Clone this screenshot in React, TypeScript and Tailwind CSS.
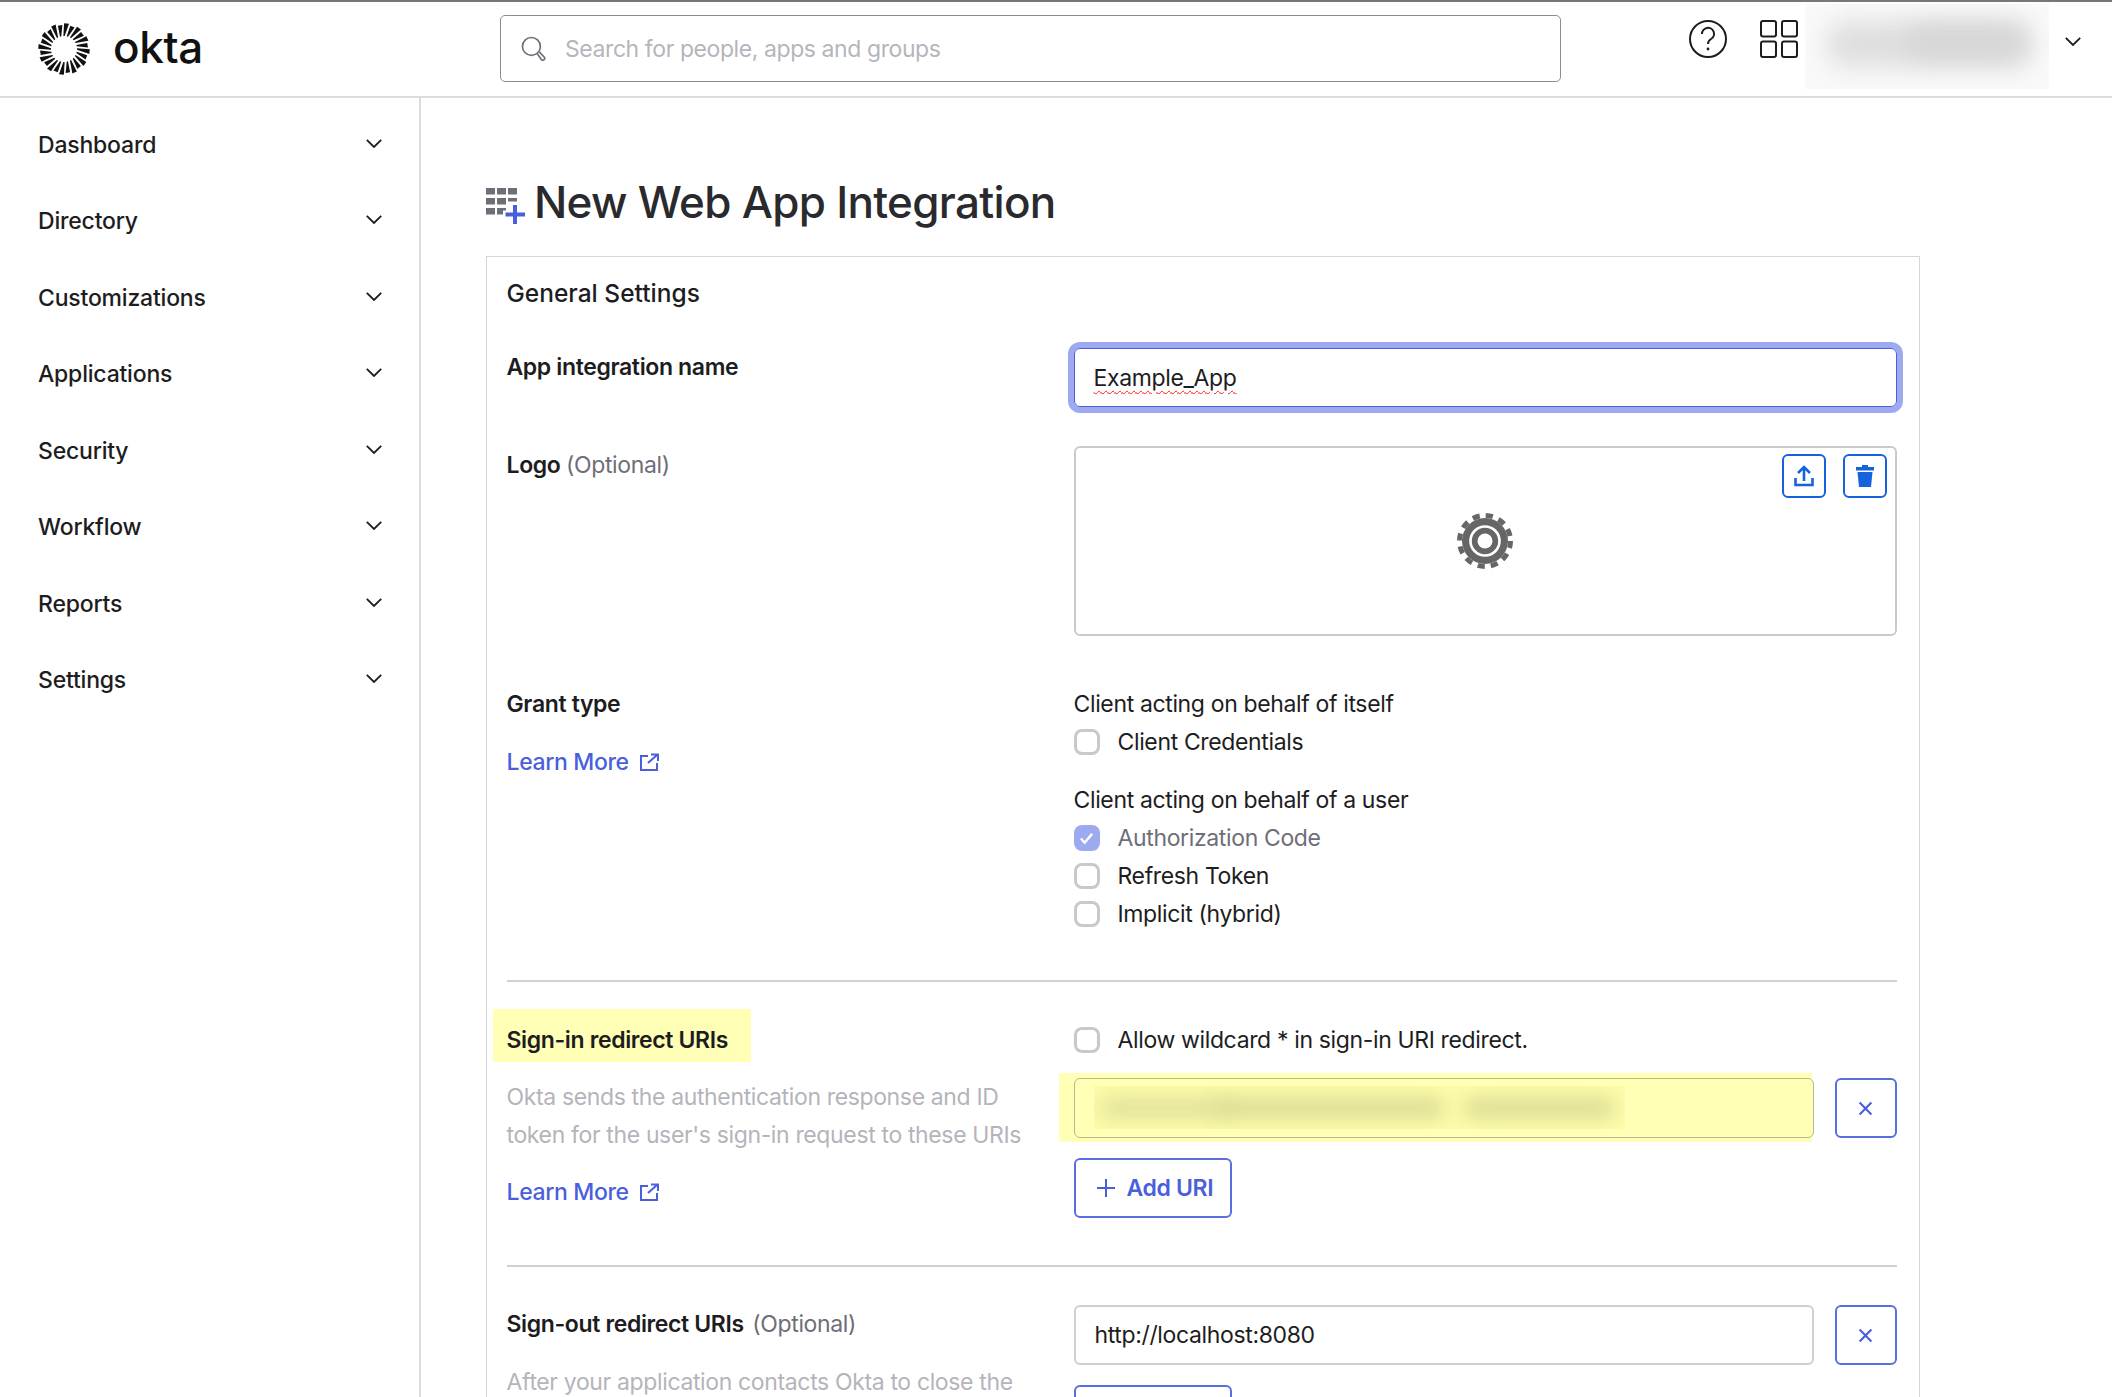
import { ReactNode } from "react";

const navItems = ["Dashboard", "Directory", "Customizations", "Applications", "Security", "Workflow", "Reports", "Settings"];

function Chevron({ className }: { className?: string }) {
	return (
		<svg viewBox="0 0 16 9" className={className} fill="none" stroke="currentColor" strokeWidth="1.8">
			<path d="M0.8 0.8 L8 8 L15.2 0.8" />
		</svg>
	);
}

function OktaMark() {
	const rays = Array.from({ length: 24 }, (_, i) => i);
	return (
		<svg viewBox="0 0 52 52" className="w-[52px] h-[52px]">
			{rays.map((i) => {
				const a = (i / 24) * Math.PI * 2;
				const b = a + 0.1;
				const outer = i % 2 === 0 ? 25.8 : 24;
				const inner = 13;
				const w = 0.095;
				const pts = [
					[26 + inner * Math.cos(a - 0.05), 26 + inner * Math.sin(a - 0.05)],
					[26 + inner * Math.cos(a + 0.05), 26 + inner * Math.sin(a + 0.05)],
					[26 + outer * Math.cos(b + w), 26 + outer * Math.sin(b + w)],
					[26 + outer * Math.cos(b - w), 26 + outer * Math.sin(b - w)],
				];
				return <polygon key={i} points={pts.map((p) => p.join(",")).join(" ")} fill="#111" />;
			})}
		</svg>
	);
}

function ExternalIcon() {
	return (
		<svg viewBox="0 0 21 18" className="w-[21px] h-[18px] ml-[10px]" fill="none" stroke="currentColor" strokeWidth="2">
			<path d="M9 3 H2 V17 H18 V10" />
			<path d="M9 10 L18 2 M12 1.5 H19 V8" />
		</svg>
	);
}

function LearnMore({ className }: { className?: string }) {
	return (
		<div className={`flex items-center h-[38px] text-[#4a5fdc] font-medium ${className ?? ""}`}>
			Learn More
			<ExternalIcon />
		</div>
	);
}

function CheckRow({ label, checked }: { label: string; checked?: boolean }) {
	return (
		<div className="flex items-center h-[38px]">
			{checked ? (
				<div className="w-[26px] h-[26px] rounded-[8px] bg-[#9daaf0] flex items-center justify-center">
					<svg viewBox="0 0 16 14" className="w-[15px] h-[13px]" fill="none" stroke="white" strokeWidth="2.6">
						<path d="M2 7 L6 11.5 L14 2" />
					</svg>
				</div>
			) : (
				<div className="w-[26px] h-[26px] rounded-[8px] border-[3px] border-[#c9c9cc] bg-white" />
			)}
			<span className={`ml-[18px] ${checked ? "text-[#6e6e78]" : ""}`}>{label}</span>
		</div>
	);
}

function XButton() {
	return (
		<div className="w-[62px] h-[60px] rounded-[6px] border-2 border-[#5b6ee0] flex items-center justify-center text-[#4a5fdc]">
			<svg viewBox="0 0 14 14" className="w-[15px] h-[15px]" fill="none" stroke="currentColor" strokeWidth="2">
				<path d="M1.5 1.5 L12.5 12.5 M12.5 1.5 L1.5 12.5" />
			</svg>
		</div>
	);
}

function AddUri() {
	return (
		<div className="w-[158px] h-[60px] rounded-[6px] border-2 border-[#5b6ee0] flex items-center pl-[21px] text-[#4a5fdc] font-semibold">
			<svg viewBox="0 0 18 18" className="w-[18px] h-[18px] mr-[12px]" fill="none" stroke="currentColor" strokeWidth="2">
				<path d="M9 0 V18 M0 9 H18" />
			</svg>
			Add URI
		</div>
	);
}

function Row({ left, right }: { left: ReactNode; right: ReactNode }) {
	return (
		<div className="grid grid-cols-[567px_823px]">
			<div>{left}</div>
			<div>{right}</div>
		</div>
	);
}

function Gear() {
	return (
		<svg viewBox="0 0 58 58" className="w-[58px] h-[58px]">
			<circle cx="29" cy="29" r="23" fill="#666" />
			<circle cx="29" cy="29" r="25.5" fill="none" stroke="#666" strokeWidth="5" strokeDasharray="7.2 6.15" />
			<circle cx="29" cy="29" r="14.5" fill="none" stroke="#fff" strokeWidth="2.6" />
			<circle cx="29" cy="29" r="7.5" fill="#fff" />
		</svg>
	);
}

function Header() {
	return (
		<header className="h-[98px] shrink-0 border-t-2 border-t-[#777] border-b-2 border-b-[#dcdce0] flex items-center relative">
			<div className="ml-[38px] w-[52px] -mt-[1px]">
				<OktaMark />
			</div>
			<div className="ml-[23px] w-[387px] text-[44px] font-medium text-[#111] leading-none -mt-[4px]">okta</div>
			<div className="w-[1061px] h-[67px] -mt-[2px] rounded-[5px] border-[1.5px] border-[#8c8c96] flex items-center pl-[20px]">
				<svg viewBox="0 0 24 24" className="w-[25px] h-[25px] mt-[1px]" fill="none" stroke="#6e6e78" strokeWidth="1.6">
					<circle cx="10" cy="10" r="8.6" />
					<path d="M15.6 17 L19.4 22.4 a1.7 1.7 0 0 0 3 -2 L17.6 15.2" />
				</svg>
				<span className="ml-[19px] mt-[2px] text-[#b5b5bc] tracking-[-0.42px]">Search for people, apps and groups</span>
			</div>
			<svg viewBox="0 0 38 38" className="ml-[128px] -mt-[21px] w-[38px] h-[38px]" fill="none" stroke="#1d1d21" strokeWidth="2">
				<circle cx="19" cy="19" r="18" />
				<path d="M13 14 a6 6 0 1 1 9 5 c-2 1.3 -3 2.5 -3 5" />
				<circle cx="19" cy="29" r="1.4" fill="#1d1d21" stroke="none" />
			</svg>
			<svg viewBox="0 0 38 38" className="ml-[33px] -mt-[21px] w-[38px] h-[38px]" fill="none" stroke="#1d1d21" strokeWidth="2">
				<rect x="1" y="1" width="15" height="15.5" rx="2" />
				<rect x="22" y="1" width="15" height="15.5" rx="2" />
				<rect x="1" y="21.5" width="15" height="15.5" rx="2" />
				<rect x="22" y="21.5" width="15" height="15.5" rx="2" />
			</svg>
			<div className="ml-[7px] -mt-[5px] w-[244px] h-[85px] overflow-hidden bg-[#f9f9f9] relative">
				<div className="absolute left-[22px] top-[17px] w-[205px] h-[46px] rounded-[20px] bg-[#dedede] blur-[12px]" />
				<div className="absolute left-[100px] top-[22px] w-[120px] h-[32px] rounded-full bg-[#d6d6d6] blur-[11px]" />
			</div>
			<Chevron className="ml-[16px] -mt-[15px] w-[16px] h-[9px] text-[#1d1d21]" />
		</header>
	);
}

function Sidebar() {
	return (
		<aside className="w-[421px] shrink-0 border-r-2 border-r-[#dcdce0] pt-[10px] pl-[38px]">
			{navItems.map((item) => (
				<div key={item} className="h-[76.5px] w-[344px] flex items-center justify-between pb-[3px] font-medium text-[#1d1d21] tracking-[-0.2px]">
					{item}
					<Chevron className="w-[16px] h-[9px] -mt-[3px]" />
				</div>
			))}
		</aside>
	);
}

export default function App() {
	return (
		<div className="w-[2112px] h-[1397px] overflow-hidden bg-white flex flex-col [font-family:Inter,sans-serif] text-[23px] leading-[38px] tracking-[-0.36px] text-[#1d1d21]">
			<Header />
			<div className="flex flex-1 min-h-0">
				<Sidebar />
				<main className="pl-[65px] pt-[71px]">
					<div className="flex items-center h-[66px]">
						<svg viewBox="0 0 39 36" className="w-[39px] h-[36px] mt-[8px]">
							<g fill="#6e6e78">
								<rect x="0" y="0" width="9" height="6.5" />
								<rect x="11" y="0" width="9" height="6.5" />
								<rect x="22" y="0" width="9" height="6.5" />
								<rect x="0" y="10" width="9" height="6.5" />
								<rect x="11" y="10" width="9" height="6.5" />
								<rect x="22" y="10" width="9" height="3.5" />
								<rect x="0" y="20" width="9" height="6.5" />
								<rect x="11" y="20" width="6" height="6.5" />
								<rect x="11" y="20" width="9" height="2.5" />
							</g>
							<path d="M29 17 V36 M19.5 26.5 H39" stroke="#4a5fdc" strokeWidth="4" />
						</svg>
						<h1 className="ml-[9px] text-[44px] leading-[66px] font-medium text-[#2a2a2e] tracking-[-0.7px]">New Web App Integration</h1>
					</div>
					<div className="mt-[21px] w-[1434px] border-[1.5px] border-[#d5d5da] pl-[19.5px] pt-[17px]">
						<h2 className="text-[24.5px] leading-[38px] font-medium tracking-[0px]">General Settings</h2>
						<div className="mt-[36px]">
							<Row
								left={<div className="font-semibold">App integration name</div>}
								right={
									<div className="h-[59px] rounded-[6px] border-[1.5px] border-[#4a5fdc] ring-[6px] ring-[#9daaf0] flex items-center pl-[19px]">
										<span className="underline decoration-wavy decoration-[#ff1a1a] decoration-[1px] underline-offset-[4px]">Example_App</span>
									</div>
								}
							/>
						</div>
						<div className="mt-[39px]">
							<Row
								left={
									<div className="font-semibold">
										Logo <span className="font-normal text-[#6e6e78]">(Optional)</span>
									</div>
								}
								right={
									<div className="h-[190px] rounded-[6px] border-2 border-[#c9c9ce] relative flex items-center justify-center">
										<Gear />
										<div className="absolute top-[6px] right-[8px] flex gap-[17px]">
											<div className="w-[44px] h-[44px] rounded-[6px] border-2 border-[#1662dd] flex items-center justify-center">
												<svg viewBox="0 0 20 22" className="w-[20px] h-[22px]" fill="none" stroke="#1662dd" strokeWidth="2.6">
													<path d="M10 16 V2 M4 8 L10 2 L16 8" />
													<path d="M1.5 13 V20 H18.5 V13" />
												</svg>
											</div>
											<div className="w-[44px] h-[44px] rounded-[6px] border-2 border-[#1662dd] flex items-center justify-center">
												<svg viewBox="0 0 18 22" className="w-[18px] h-[22px]" fill="#1662dd">
													<rect x="6" y="0" width="6" height="3" />
													<rect x="0" y="2" width="18" height="3.5" />
													<path d="M1.5 7 H16.5 L15 22 H3 Z" />
												</svg>
											</div>
										</div>
									</div>
								}
							/>
						</div>
						<div className="mt-[49px]">
							<Row
								left={
									<>
										<div className="font-semibold">Grant type</div>
										<LearnMore className="mt-[20px]" />
									</>
								}
								right={
									<>
										<div>Client acting on behalf of itself</div>
										<CheckRow label="Client Credentials" />
										<div className="mt-[20px]">Client acting on behalf of a user</div>
										<CheckRow label="Authorization Code" checked />
										<CheckRow label="Refresh Token" />
										<CheckRow label="Implicit (hybrid)" />
									</>
								}
							/>
						</div>
						<div className="mt-[47px] w-[1390px] h-[2px] bg-[#d0d0d6]" />
						<div className="mt-[39px]">
							<Row
								left={
									<>
										<div className="-mt-[12px] -ml-[14px] w-[258px] h-[53px] pt-[12px] pl-[14px] bg-[#ffffb5] font-semibold">Sign-in redirect URIs</div>
										<div className="mt-[16px] w-[540px] text-[#b4b4bb]">Okta sends the authentication response and ID token for the user's sign-in request to these URIs</div>
										<LearnMore className="mt-[19px]" />
									</>
								}
								right={
									<>
										<CheckRow label="Allow wildcard * in sign-in URI redirect." />
										<div className="mt-[19px] flex gap-[21px]">
											<div className="relative w-[740px] h-[60px]">
												<div className="absolute -left-[15px] -top-[5px] -bottom-[4px] right-[2px] bg-[#ffffb5]" />
												<div className="absolute inset-0 rounded-[6px] border-[1.5px] border-[#b9b98e] bg-[#ffffb5] overflow-hidden">
													<div className="absolute left-[19px] top-[7px] w-[531px] h-[43px] bg-[#fbfba9] overflow-hidden">
														<div className="absolute left-[6px] top-[12px] w-[130px] h-[20px] rounded-full bg-[#e2e29c] blur-[9px]" />
														<div className="absolute left-[120px] top-[12px] w-[230px] h-[20px] rounded-full bg-[#dcdc96] blur-[9px]" />
														<div className="absolute left-[370px] top-[12px] w-[150px] h-[20px] rounded-full bg-[#dcdc96] blur-[9px]" />
													</div>
												</div>
											</div>
											<XButton />
										</div>
										<div className="mt-[20px]">
											<AddUri />
										</div>
									</>
								}
							/>
						</div>
						<div className="mt-[47px] w-[1390px] h-[2px] bg-[#d0d0d6]" />
						<div className="mt-[38px]">
							<Row
								left={
									<>
										<div className="font-semibold">
											Sign-out redirect URIs <span className="ml-[3px] font-normal text-[#6e6e78]">(Optional)</span>
										</div>
										<div className="mt-[20px] w-[540px] text-[#b4b4bb]">After your application contacts Okta to close the</div>
									</>
								}
								right={
									<>
										<div className="flex gap-[21px]">
											<div className="w-[740px] h-[60px] rounded-[6px] border-2 border-[#d0d0d4] flex items-center pl-[19px]">http://localhost:8080</div>
											<XButton />
										</div>
										<div className="mt-[20px]">
											<AddUri />
										</div>
									</>
								}
							/>
						</div>
					</div>
				</main>
			</div>
		</div>
	);
}
